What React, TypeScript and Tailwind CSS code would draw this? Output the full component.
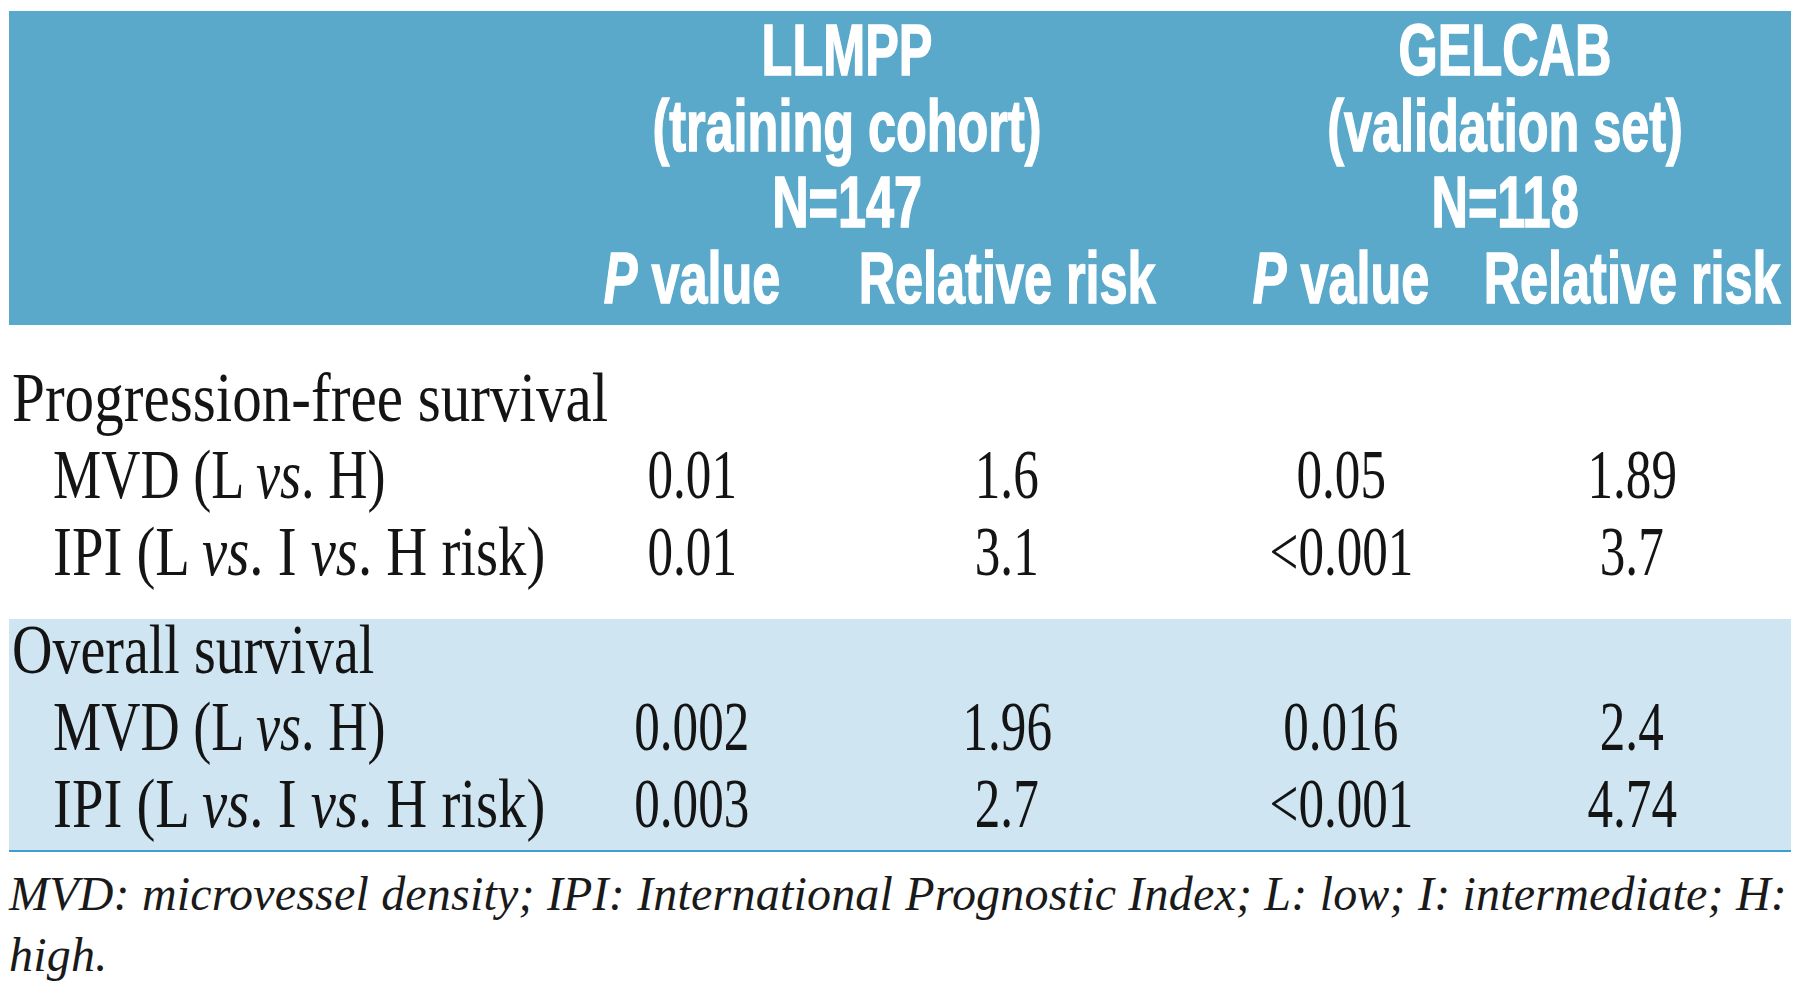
const cols = 'grid grid-cols-[523px_320px_310px_358px_224px]'
const sans = "font-['Liberation_Sans',Arial,sans-serif]"
const serif = "font-['Liberation_Serif','Times_New_Roman',serif]"

type RowProps = { label: React.ReactNode; values?: string[]; heading?: boolean; squeeze?: string }

function Vs() {
  return <i>vs</i>
}

function Row({ label, values = [], heading, squeeze = 'scale-x-[0.78]' }: RowProps) {
  return (
    <div className={`${cols} h-[77px] items-start text-[70px] leading-[62px] text-[#141414]`}>
      <div className={heading ? 'pl-[3px]' : 'pl-[44px]'}>
        <span className={`inline-block origin-left whitespace-nowrap ${squeeze}`}>{label}</span>
      </div>
      {values.map((v, i) => (
        <div key={i} className="flex justify-center">
          <span className="inline-block whitespace-nowrap scale-x-[0.73]">{v}</span>
        </div>
      ))}
    </div>
  )
}

function HeadLine({ children }: { children: React.ReactNode }) {
  return <span className="inline-block whitespace-nowrap scale-x-[0.7]">{children}</span>
}

export default function App() {
  const mvd = (
    <>
      MVD (L <Vs />. H)
    </>
  )
  const ipi = (
    <>
      IPI (L <Vs />. I <Vs />. H risk)
    </>
  )

  return (
    <div className="w-[1800px] h-[996px] bg-white pt-[11px] pl-[9px]">
      <div className="w-[1782px]">
        <div
          className={`${cols} ${sans} bg-[#5aa8ca] pt-[1px] pb-[9px] text-white font-bold text-[72px] leading-[76px] [-webkit-text-stroke:1.5px_white]`}
        >
          <div className="col-start-2 col-span-2 flex flex-col items-center">
            <HeadLine>LLMPP</HeadLine>
            <HeadLine>(training cohort)</HeadLine>
            <HeadLine>N=147</HeadLine>
          </div>
          <div className="col-start-4 col-span-2 flex flex-col items-center pl-[104px]">
            <HeadLine>GELCAB</HeadLine>
            <HeadLine>(validation set)</HeadLine>
            <HeadLine>N=118</HeadLine>
          </div>
          <div className="col-start-2 flex justify-center">
            <HeadLine>
              <i>P</i> value
            </HeadLine>
          </div>
          <div className="flex justify-center">
            <HeadLine>Relative risk</HeadLine>
          </div>
          <div className="flex justify-center">
            <HeadLine>
              <i>P</i> value
            </HeadLine>
          </div>
          <div className="flex justify-center">
            <HeadLine>Relative risk</HeadLine>
          </div>
        </div>

        <div className={`${serif} mt-[42px]`}>
          <Row heading squeeze="scale-x-[0.845]" label="Progression-free survival" />
          <Row label={mvd} squeeze="scale-x-[0.775]" values={['0.01', '1.6', '0.05', '1.89']} />
          <Row label={ipi} squeeze="scale-x-[0.81]" values={['0.01', '3.1', '<0.001', '3.7']} />
        </div>

        <div className={`${serif} mt-[21px] bg-[#cfe5f2] border-b-2 border-[#3b9fcf]`}>
          <Row heading squeeze="scale-x-[0.8]" label="Overall survival" />
          <Row label={mvd} squeeze="scale-x-[0.775]" values={['0.002', '1.96', '0.016', '2.4']} />
          <Row label={ipi} squeeze="scale-x-[0.81]" values={['0.003', '2.7', '<0.001', '4.74']} />
        </div>

        <p className={`${serif} italic mt-[11px] text-[48px] tracking-[0.2px] leading-[61px] text-[#1a1a1a]`}>
          MVD: microvessel density; IPI: International Prognostic Index; L: low; I: intermediate; H:
          high.
        </p>
      </div>
    </div>
  )
}
